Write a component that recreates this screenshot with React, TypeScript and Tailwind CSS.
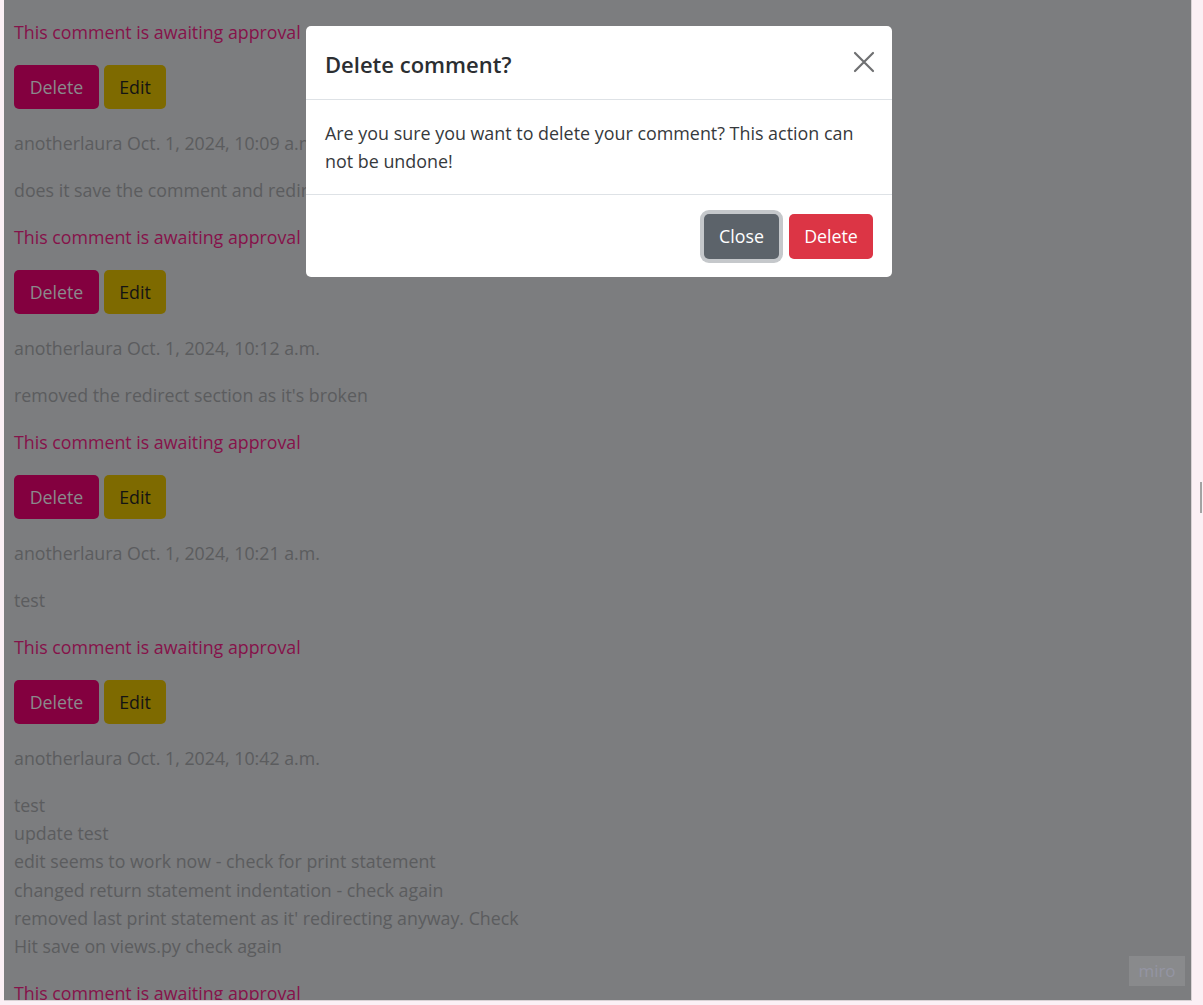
import React from "react";

const font = { fontFamily: '"Open Sans", "Noto Sans", Arial, sans-serif' };

function Awaiting() {
  return <p className="text-[#86124a] leading-[28px] mb-[19px]">This comment is awaiting approval</p>;
}

function Buttons() {
  return (
    <div className="flex gap-[5px] mb-[20px]">
      <div className="h-[44px] w-[85px] rounded-[5px] bg-[#83003f] text-[#8a8a8c] flex items-center justify-center">Delete</div>
      <div className="h-[44px] w-[62px] rounded-[5px] bg-[#7e6a00] text-[#141414] flex items-center justify-center">Edit</div>
    </div>
  );
}

function Meta({ t }: { t: string }) {
  return <p className="text-[#5b5c5e] leading-[28px] mb-[19px]">{t}</p>;
}

export default function App() {
  const lastLines = [
    "test",
    "update test",
    "edit seems to work now - check for print statement",
    "changed return statement indentation - check again",
    "removed last print statement as it' redirecting anyway. Check",
    "Hit save on views.py check again",
  ];
  return (
    <div className="w-[1203px] h-[1005px] bg-[#fbf0f5] relative overflow-hidden" style={font}>
      <div className="ml-[4px] w-[1188px] h-[1001px] bg-[#7c7d7f] overflow-hidden pl-[10px] pt-[18px] text-[17.8px] border-r border-b border-[#d8d2d5]">
        <Awaiting />
        <Buttons />
        <Meta t="anotherlaura Oct. 1, 2024, 10:09 a.m." />
        <Meta t="does it save the comment and redirect to the post?" />
        <Awaiting />
        <Buttons />
        <Meta t="anotherlaura Oct. 1, 2024, 10:12 a.m." />
        <Meta t="removed the redirect section as it's broken" />
        <Awaiting />
        <Buttons />
        <Meta t="anotherlaura Oct. 1, 2024, 10:21 a.m." />
        <Meta t="test" />
        <Awaiting />
        <Buttons />
        <Meta t="anotherlaura Oct. 1, 2024, 10:42 a.m." />
        <div className="text-[#5b5c5e] leading-[28.2px] mb-[19px]">
          {lastLines.map((l) => (
            <div key={l}>{l}</div>
          ))}
        </div>
        <Awaiting />
      </div>

      {/* scrollbar thumb */}
      <div className="absolute left-[1200px] top-[482px] w-[2px] h-[31px] bg-[#a3a3a3]" />

      {/* miro badge */}
      <div className="absolute left-[1129px] top-[956px] w-[56px] h-[30px] bg-[#898a8c] flex items-center justify-center text-[17px] text-[#9495a3]">
        miro
      </div>

      {/* modal */}
      <div className="absolute left-[306px] top-[26px] w-[586px] bg-white rounded-[5px] flex flex-col">
        <div className="h-[74px] px-[19px] pt-[3px] flex items-center justify-between border-b border-[#dee2e6]">
          <h5 className="text-[22px] font-semibold text-[#2b2e31]">Delete comment?</h5>
          <svg width="22" height="22" viewBox="0 0 22 22" className="mr-[-2px] mt-[-4px]">
            <path d="M2 2 L20 20 M20 2 L2 20" stroke="#6f7072" strokeWidth="2.2" strokeLinecap="round" />
          </svg>
        </div>
        <div className="px-[19px] py-[19px] text-[17.9px] leading-[28px] text-[#36393c] h-[95px] border-b border-[#dee2e6]">
          Are you sure you want to delete your comment? This action can
          <br />
          not be undone!
        </div>
        <div className="h-[82px] flex items-center justify-end gap-[10px] pr-[19px]">
          <div className="h-[45px] w-[75px] rounded-[5px] bg-[#5c636a] text-white text-[17.8px] flex items-center justify-center ring-[4px] ring-[#c5c8cb]">
            Close
          </div>
          <div className="h-[45px] w-[84px] rounded-[5px] bg-[#dc3545] text-white text-[17.8px] flex items-center justify-center">
            Delete
          </div>
        </div>
      </div>
    </div>
  );
}
